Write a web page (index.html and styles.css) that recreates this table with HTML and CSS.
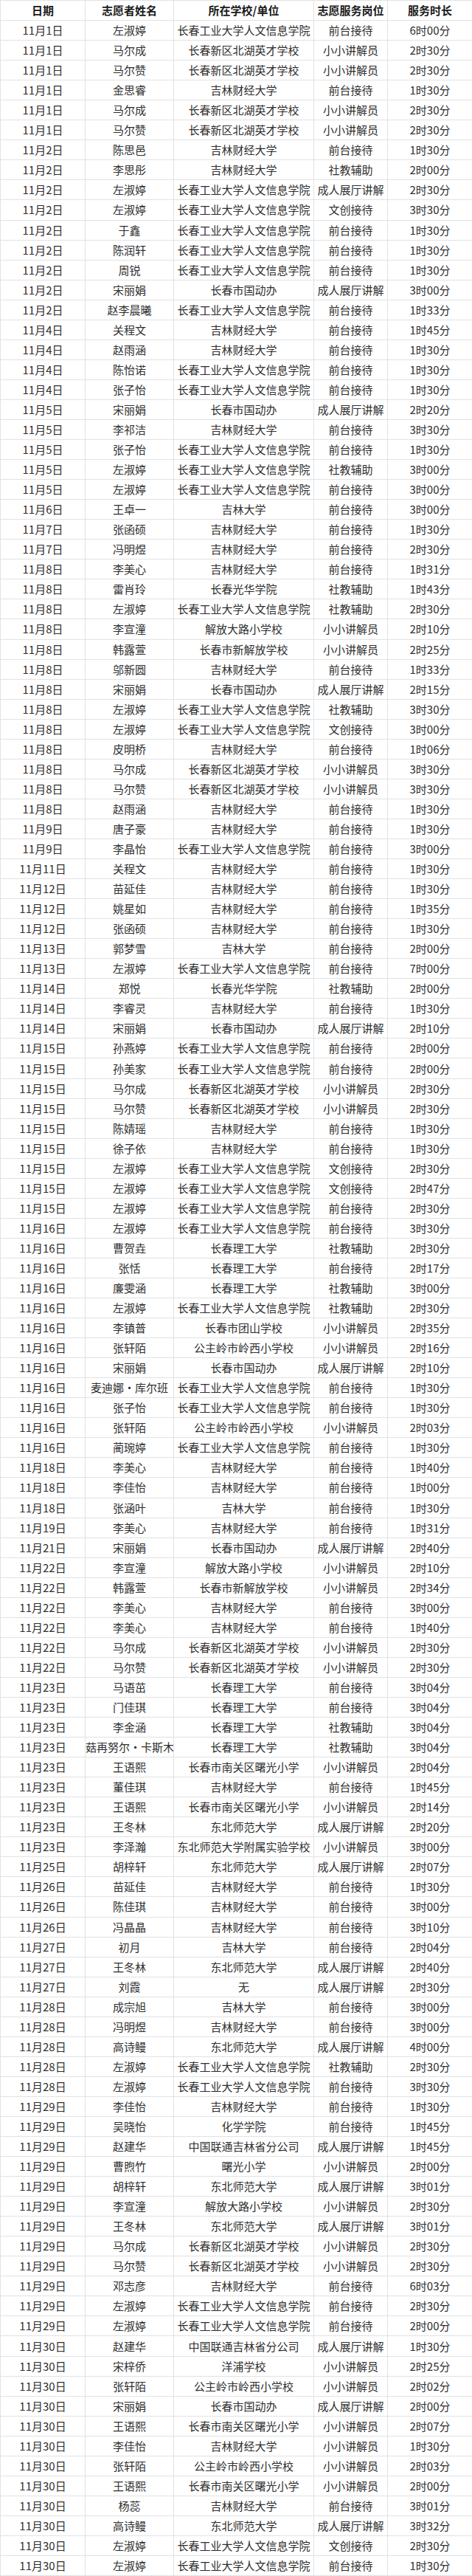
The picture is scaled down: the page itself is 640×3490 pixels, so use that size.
FILE: index.html
```html
<!DOCTYPE html>
<html lang="zh-CN">
<head>
<meta charset="utf-8">
<title>志愿服务时长统计</title>
<link rel="stylesheet" href="styles.css">
</head>
<body>
<table class="sheet">
<colgroup><col class="c-date"><col class="c-name"><col class="c-org"><col class="c-post"><col class="c-time"></colgroup>
<thead>
<tr><th>日期</th><th>志愿者姓名</th><th>所在学校/单位</th><th>志愿服务岗位</th><th>服务时长</th></tr>
</thead>
<tbody>
<tr><td>11月1日</td><td>左淑婷</td><td>长春工业大学人文信息学院</td><td>前台接待</td><td>6时00分</td></tr>
<tr><td>11月1日</td><td>马尔成</td><td>长春新区北湖英才学校</td><td>小小讲解员</td><td>2时30分</td></tr>
<tr><td>11月1日</td><td>马尔赞</td><td>长春新区北湖英才学校</td><td>小小讲解员</td><td>2时30分</td></tr>
<tr><td>11月1日</td><td>金思睿</td><td>吉林财经大学</td><td>前台接待</td><td>1时30分</td></tr>
<tr><td>11月1日</td><td>马尔成</td><td>长春新区北湖英才学校</td><td>小小讲解员</td><td>2时30分</td></tr>
<tr><td>11月1日</td><td>马尔赞</td><td>长春新区北湖英才学校</td><td>小小讲解员</td><td>2时30分</td></tr>
<tr><td>11月2日</td><td>陈思邑</td><td>吉林财经大学</td><td>前台接待</td><td>1时30分</td></tr>
<tr><td>11月2日</td><td>李思彤</td><td>吉林财经大学</td><td>社教辅助</td><td>2时00分</td></tr>
<tr><td>11月2日</td><td>左淑婷</td><td>长春工业大学人文信息学院</td><td>成人展厅讲解</td><td>2时30分</td></tr>
<tr><td>11月2日</td><td>左淑婷</td><td>长春工业大学人文信息学院</td><td>文创接待</td><td>3时30分</td></tr>
<tr><td>11月2日</td><td>于鑫</td><td>长春工业大学人文信息学院</td><td>前台接待</td><td>1时30分</td></tr>
<tr><td>11月2日</td><td>陈润轩</td><td>长春工业大学人文信息学院</td><td>前台接待</td><td>1时30分</td></tr>
<tr><td>11月2日</td><td>周锐</td><td>长春工业大学人文信息学院</td><td>前台接待</td><td>1时30分</td></tr>
<tr><td>11月2日</td><td>宋丽娟</td><td>长春市国动办</td><td>成人展厅讲解</td><td>3时00分</td></tr>
<tr><td>11月2日</td><td>赵李晨曦</td><td>长春工业大学人文信息学院</td><td>前台接待</td><td>1时33分</td></tr>
<tr><td>11月4日</td><td>关程文</td><td>吉林财经大学</td><td>前台接待</td><td>1时45分</td></tr>
<tr><td>11月4日</td><td>赵雨涵</td><td>吉林财经大学</td><td>前台接待</td><td>1时30分</td></tr>
<tr><td>11月4日</td><td>陈怡诺</td><td>长春工业大学人文信息学院</td><td>前台接待</td><td>1时30分</td></tr>
<tr><td>11月4日</td><td>张子怡</td><td>长春工业大学人文信息学院</td><td>前台接待</td><td>1时30分</td></tr>
<tr><td>11月5日</td><td>宋丽娟</td><td>长春市国动办</td><td>成人展厅讲解</td><td>2时20分</td></tr>
<tr><td>11月5日</td><td>李祁洁</td><td>吉林财经大学</td><td>前台接待</td><td>3时30分</td></tr>
<tr><td>11月5日</td><td>张子怡</td><td>长春工业大学人文信息学院</td><td>前台接待</td><td>1时30分</td></tr>
<tr><td>11月5日</td><td>左淑婷</td><td>长春工业大学人文信息学院</td><td>社教辅助</td><td>3时00分</td></tr>
<tr><td>11月5日</td><td>左淑婷</td><td>长春工业大学人文信息学院</td><td>前台接待</td><td>3时00分</td></tr>
<tr><td>11月6日</td><td>王卓一</td><td>吉林大学</td><td>前台接待</td><td>3时00分</td></tr>
<tr><td>11月7日</td><td>张函硕</td><td>吉林财经大学</td><td>前台接待</td><td>1时30分</td></tr>
<tr><td>11月7日</td><td>冯明煜</td><td>吉林财经大学</td><td>前台接待</td><td>2时30分</td></tr>
<tr><td>11月8日</td><td>李美心</td><td>吉林财经大学</td><td>前台接待</td><td>1时31分</td></tr>
<tr><td>11月8日</td><td>雷肖玲</td><td>长春光华学院</td><td>社教辅助</td><td>1时43分</td></tr>
<tr><td>11月8日</td><td>左淑婷</td><td>长春工业大学人文信息学院</td><td>社教辅助</td><td>2时30分</td></tr>
<tr><td>11月8日</td><td>李宣潼</td><td>解放大路小学校</td><td>小小讲解员</td><td>2时10分</td></tr>
<tr><td>11月8日</td><td>韩露萱</td><td>长春市新解放学校</td><td>小小讲解员</td><td>2时25分</td></tr>
<tr><td>11月8日</td><td>邬新圆</td><td>吉林财经大学</td><td>前台接待</td><td>1时33分</td></tr>
<tr><td>11月8日</td><td>宋丽娟</td><td>长春市国动办</td><td>成人展厅讲解</td><td>2时15分</td></tr>
<tr><td>11月8日</td><td>左淑婷</td><td>长春工业大学人文信息学院</td><td>社教辅助</td><td>3时30分</td></tr>
<tr><td>11月8日</td><td>左淑婷</td><td>长春工业大学人文信息学院</td><td>文创接待</td><td>3时00分</td></tr>
<tr><td>11月8日</td><td>皮明桥</td><td>吉林财经大学</td><td>前台接待</td><td>1时06分</td></tr>
<tr><td>11月8日</td><td>马尔成</td><td>长春新区北湖英才学校</td><td>小小讲解员</td><td>3时30分</td></tr>
<tr><td>11月8日</td><td>马尔赞</td><td>长春新区北湖英才学校</td><td>小小讲解员</td><td>3时30分</td></tr>
<tr><td>11月8日</td><td>赵雨涵</td><td>吉林财经大学</td><td>前台接待</td><td>1时30分</td></tr>
<tr><td>11月9日</td><td>唐子豪</td><td>吉林财经大学</td><td>前台接待</td><td>1时30分</td></tr>
<tr><td>11月9日</td><td>李晶怡</td><td>长春工业大学人文信息学院</td><td>前台接待</td><td>3时00分</td></tr>
<tr><td>11月11日</td><td>关程文</td><td>吉林财经大学</td><td>前台接待</td><td>1时30分</td></tr>
<tr><td>11月12日</td><td>苗延佳</td><td>吉林财经大学</td><td>前台接待</td><td>1时30分</td></tr>
<tr><td>11月12日</td><td>姚星如</td><td>吉林财经大学</td><td>前台接待</td><td>1时35分</td></tr>
<tr><td>11月12日</td><td>张函硕</td><td>吉林财经大学</td><td>前台接待</td><td>1时30分</td></tr>
<tr><td>11月13日</td><td>郭梦雪</td><td>吉林大学</td><td>前台接待</td><td>2时00分</td></tr>
<tr><td>11月13日</td><td>左淑婷</td><td>长春工业大学人文信息学院</td><td>前台接待</td><td>7时00分</td></tr>
<tr><td>11月14日</td><td>郑悦</td><td>长春光华学院</td><td>社教辅助</td><td>2时00分</td></tr>
<tr><td>11月14日</td><td>李睿灵</td><td>吉林财经大学</td><td>前台接待</td><td>1时30分</td></tr>
<tr><td>11月14日</td><td>宋丽娟</td><td>长春市国动办</td><td>成人展厅讲解</td><td>2时10分</td></tr>
<tr><td>11月15日</td><td>孙燕婷</td><td>长春工业大学人文信息学院</td><td>前台接待</td><td>2时00分</td></tr>
<tr><td>11月15日</td><td>孙美家</td><td>长春工业大学人文信息学院</td><td>前台接待</td><td>2时00分</td></tr>
<tr><td>11月15日</td><td>马尔成</td><td>长春新区北湖英才学校</td><td>小小讲解员</td><td>2时30分</td></tr>
<tr><td>11月15日</td><td>马尔赞</td><td>长春新区北湖英才学校</td><td>小小讲解员</td><td>2时30分</td></tr>
<tr><td>11月15日</td><td>陈婧瑶</td><td>吉林财经大学</td><td>前台接待</td><td>1时30分</td></tr>
<tr><td>11月15日</td><td>徐子依</td><td>吉林财经大学</td><td>前台接待</td><td>1时30分</td></tr>
<tr><td>11月15日</td><td>左淑婷</td><td>长春工业大学人文信息学院</td><td>文创接待</td><td>2时30分</td></tr>
<tr><td>11月15日</td><td>左淑婷</td><td>长春工业大学人文信息学院</td><td>文创接待</td><td>2时47分</td></tr>
<tr><td>11月15日</td><td>左淑婷</td><td>长春工业大学人文信息学院</td><td>前台接待</td><td>2时30分</td></tr>
<tr><td>11月16日</td><td>左淑婷</td><td>长春工业大学人文信息学院</td><td>前台接待</td><td>3时30分</td></tr>
<tr><td>11月16日</td><td>曹贺垚</td><td>长春理工大学</td><td>社教辅助</td><td>2时30分</td></tr>
<tr><td>11月16日</td><td>张恬</td><td>长春理工大学</td><td>前台接待</td><td>2时17分</td></tr>
<tr><td>11月16日</td><td>廉雯涵</td><td>长春理工大学</td><td>社教辅助</td><td>3时00分</td></tr>
<tr><td>11月16日</td><td>左淑婷</td><td>长春工业大学人文信息学院</td><td>社教辅助</td><td>2时30分</td></tr>
<tr><td>11月16日</td><td>李镇普</td><td>长春市团山学校</td><td>小小讲解员</td><td>2时35分</td></tr>
<tr><td>11月16日</td><td>张轩陌</td><td>公主岭市岭西小学校</td><td>小小讲解员</td><td>2时16分</td></tr>
<tr><td>11月16日</td><td>宋丽娟</td><td>长春市国动办</td><td>成人展厅讲解</td><td>2时10分</td></tr>
<tr><td>11月16日</td><td>麦迪娜·库尔班</td><td>长春工业大学人文信息学院</td><td>前台接待</td><td>1时30分</td></tr>
<tr><td>11月16日</td><td>张子怡</td><td>长春工业大学人文信息学院</td><td>前台接待</td><td>1时30分</td></tr>
<tr><td>11月16日</td><td>张轩陌</td><td>公主岭市岭西小学校</td><td>小小讲解员</td><td>2时03分</td></tr>
<tr><td>11月16日</td><td>蔺琬婷</td><td>长春工业大学人文信息学院</td><td>前台接待</td><td>1时30分</td></tr>
<tr><td>11月18日</td><td>李美心</td><td>吉林财经大学</td><td>前台接待</td><td>1时40分</td></tr>
<tr><td>11月18日</td><td>李佳怡</td><td>吉林财经大学</td><td>前台接待</td><td>1时00分</td></tr>
<tr><td>11月18日</td><td>张涵叶</td><td>吉林大学</td><td>前台接待</td><td>1时30分</td></tr>
<tr><td>11月19日</td><td>李美心</td><td>吉林财经大学</td><td>前台接待</td><td>1时31分</td></tr>
<tr><td>11月21日</td><td>宋丽娟</td><td>长春市国动办</td><td>成人展厅讲解</td><td>2时40分</td></tr>
<tr><td>11月22日</td><td>李宣潼</td><td>解放大路小学校</td><td>小小讲解员</td><td>2时10分</td></tr>
<tr><td>11月22日</td><td>韩露萱</td><td>长春市新解放学校</td><td>小小讲解员</td><td>2时34分</td></tr>
<tr><td>11月22日</td><td>李美心</td><td>吉林财经大学</td><td>前台接待</td><td>3时00分</td></tr>
<tr><td>11月22日</td><td>李美心</td><td>吉林财经大学</td><td>前台接待</td><td>1时40分</td></tr>
<tr><td>11月22日</td><td>马尔成</td><td>长春新区北湖英才学校</td><td>小小讲解员</td><td>2时30分</td></tr>
<tr><td>11月22日</td><td>马尔赞</td><td>长春新区北湖英才学校</td><td>小小讲解员</td><td>2时30分</td></tr>
<tr><td>11月23日</td><td>马语茁</td><td>长春理工大学</td><td>前台接待</td><td>3时04分</td></tr>
<tr><td>11月23日</td><td>门佳琪</td><td>长春理工大学</td><td>前台接待</td><td>3时04分</td></tr>
<tr><td>11月23日</td><td>李金涵</td><td>长春理工大学</td><td>社教辅助</td><td>3时04分</td></tr>
<tr><td>11月23日</td><td>菇再努尔·卡斯木</td><td>长春理工大学</td><td>社教辅助</td><td>3时04分</td></tr>
<tr><td>11月23日</td><td>王语熙</td><td>长春市南关区曙光小学</td><td>小小讲解员</td><td>2时04分</td></tr>
<tr><td>11月23日</td><td>董佳琪</td><td>吉林财经大学</td><td>前台接待</td><td>1时45分</td></tr>
<tr><td>11月23日</td><td>王语熙</td><td>长春市南关区曙光小学</td><td>小小讲解员</td><td>2时14分</td></tr>
<tr><td>11月23日</td><td>王冬林</td><td>东北师范大学</td><td>成人展厅讲解</td><td>2时20分</td></tr>
<tr><td>11月23日</td><td>李泽瀚</td><td>东北师范大学附属实验学校</td><td>小小讲解员</td><td>3时00分</td></tr>
<tr><td>11月25日</td><td>胡梓轩</td><td>东北师范大学</td><td>成人展厅讲解</td><td>2时07分</td></tr>
<tr><td>11月26日</td><td>苗延佳</td><td>吉林财经大学</td><td>前台接待</td><td>1时30分</td></tr>
<tr><td>11月26日</td><td>陈佳琪</td><td>吉林财经大学</td><td>前台接待</td><td>3时00分</td></tr>
<tr><td>11月26日</td><td>冯晶晶</td><td>吉林财经大学</td><td>前台接待</td><td>3时10分</td></tr>
<tr><td>11月27日</td><td>初月</td><td>吉林大学</td><td>前台接待</td><td>2时04分</td></tr>
<tr><td>11月27日</td><td>王冬林</td><td>东北师范大学</td><td>成人展厅讲解</td><td>2时40分</td></tr>
<tr><td>11月27日</td><td>刘霞</td><td>无</td><td>成人展厅讲解</td><td>2时30分</td></tr>
<tr><td>11月28日</td><td>成宗旭</td><td>吉林大学</td><td>前台接待</td><td>3时00分</td></tr>
<tr><td>11月28日</td><td>冯明煜</td><td>吉林财经大学</td><td>前台接待</td><td>3时00分</td></tr>
<tr><td>11月28日</td><td>高诗鳗</td><td>东北师范大学</td><td>成人展厅讲解</td><td>4时00分</td></tr>
<tr><td>11月28日</td><td>左淑婷</td><td>长春工业大学人文信息学院</td><td>社教辅助</td><td>2时30分</td></tr>
<tr><td>11月28日</td><td>左淑婷</td><td>长春工业大学人文信息学院</td><td>前台接待</td><td>3时30分</td></tr>
<tr><td>11月29日</td><td>李佳怡</td><td>吉林财经大学</td><td>前台接待</td><td>1时30分</td></tr>
<tr><td>11月29日</td><td>吴晓怡</td><td>化学学院</td><td>前台接待</td><td>1时45分</td></tr>
<tr><td>11月29日</td><td>赵建华</td><td>中国联通吉林省分公司</td><td>成人展厅讲解</td><td>1时45分</td></tr>
<tr><td>11月29日</td><td>曹煦竹</td><td>曙光小学</td><td>小小讲解员</td><td>2时00分</td></tr>
<tr><td>11月29日</td><td>胡梓轩</td><td>东北师范大学</td><td>成人展厅讲解</td><td>3时01分</td></tr>
<tr><td>11月29日</td><td>李宣潼</td><td>解放大路小学校</td><td>小小讲解员</td><td>2时30分</td></tr>
<tr><td>11月29日</td><td>王冬林</td><td>东北师范大学</td><td>成人展厅讲解</td><td>3时01分</td></tr>
<tr><td>11月29日</td><td>马尔成</td><td>长春新区北湖英才学校</td><td>小小讲解员</td><td>2时30分</td></tr>
<tr><td>11月29日</td><td>马尔赞</td><td>长春新区北湖英才学校</td><td>小小讲解员</td><td>2时30分</td></tr>
<tr><td>11月29日</td><td>邓志彦</td><td>吉林财经大学</td><td>前台接待</td><td>6时03分</td></tr>
<tr><td>11月29日</td><td>左淑婷</td><td>长春工业大学人文信息学院</td><td>前台接待</td><td>2时30分</td></tr>
<tr><td>11月29日</td><td>左淑婷</td><td>长春工业大学人文信息学院</td><td>前台接待</td><td>2时00分</td></tr>
<tr><td>11月30日</td><td>赵建华</td><td>中国联通吉林省分公司</td><td>成人展厅讲解</td><td>1时30分</td></tr>
<tr><td>11月30日</td><td>宋梓侨</td><td>洋浦学校</td><td>小小讲解员</td><td>2时25分</td></tr>
<tr><td>11月30日</td><td>张轩陌</td><td>公主岭市岭西小学校</td><td>小小讲解员</td><td>2时02分</td></tr>
<tr><td>11月30日</td><td>宋丽娟</td><td>长春市国动办</td><td>成人展厅讲解</td><td>2时00分</td></tr>
<tr><td>11月30日</td><td>王语熙</td><td>长春市南关区曙光小学</td><td>小小讲解员</td><td>2时07分</td></tr>
<tr><td>11月30日</td><td>李佳怡</td><td>吉林财经大学</td><td>小小讲解员</td><td>1时30分</td></tr>
<tr><td>11月30日</td><td>张轩陌</td><td>公主岭市岭西小学校</td><td>小小讲解员</td><td>2时03分</td></tr>
<tr><td>11月30日</td><td>王语熙</td><td>长春市南关区曙光小学</td><td>小小讲解员</td><td>2时00分</td></tr>
<tr><td>11月30日</td><td>杨蕊</td><td>吉林财经大学</td><td>前台接待</td><td>3时01分</td></tr>
<tr><td>11月30日</td><td>高诗鳗</td><td>东北师范大学</td><td>成人展厅讲解</td><td>3时32分</td></tr>
<tr><td>11月30日</td><td>左淑婷</td><td>长春工业大学人文信息学院</td><td>文创接待</td><td>2时30分</td></tr>
<tr><td>11月30日</td><td>左淑婷</td><td>长春工业大学人文信息学院</td><td>前台接待</td><td>1时30分</td></tr>
</tbody>
</table>
</body>
</html>
```
FILE: styles.css
```css
html, body {
  margin: 0;
  padding: 0;
  background: #ffffff;
}

body {
  font-family: "Noto Sans CJK SC", "Noto Sans", sans-serif;
  color: #2e2e2e;
}

.sheet {
  width: 640px;
  table-layout: fixed;
  border-collapse: collapse;
  font-size: 15px;
}

.c-date { width: 115px; }
.c-name { width: 120px; }
.c-org  { width: 190px; }
.c-post { width: 100px; }
.c-time { width: 115px; }

.sheet tr {
  height: 27.05px;
}

.sheet th,
.sheet td {
  padding: 0;
  border: 1px solid #e2e2e2;
  text-align: center;
  vertical-align: middle;
  white-space: nowrap;
  overflow: hidden;
  line-height: 18px;
}

.sheet th {
  font-weight: 700;
  color: #1a1a1a;
}
```
